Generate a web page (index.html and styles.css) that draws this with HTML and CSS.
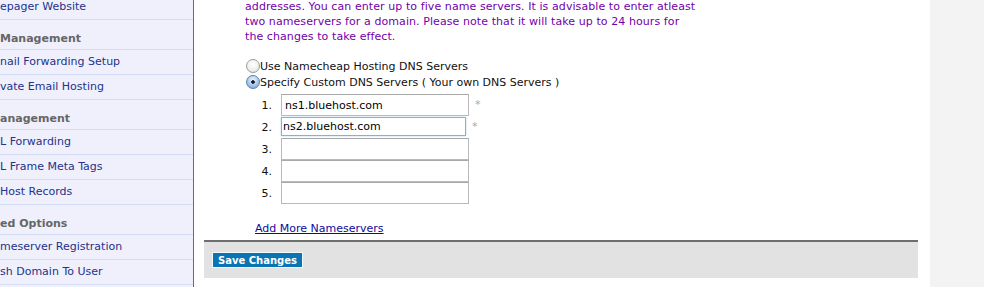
FILE: index.html
```html
<!DOCTYPE html>
<html>
<head>
<meta charset="utf-8">
<link rel="stylesheet" href="styles.css">
</head>
<body>
<div class="page">
  <aside class="sidebar">
    <div class="item first">epager Website</div>
    <div class="head">Management</div>
    <div class="item">nail Forwarding Setup</div>
    <div class="item">vate Email Hosting</div>
    <div class="head">anagement</div>
    <div class="item">L Forwarding</div>
    <div class="item">L Frame Meta Tags</div>
    <div class="item">Host Records</div>
    <div class="head">ed Options</div>
    <div class="item">meserver Registration</div>
    <div class="item">sh Domain To User</div>
    <div class="item"></div>
  </aside>
  <main class="main">
    <div class="content">
      <p class="note">addresses. You can enter up to five name servers. It is advisable to enter atleast<br>two nameservers for a domain. Please note that it will take up to 24 hours for<br>the changes to take effect.</p>
      <div class="radios">
        <label class="radio-row"><input type="radio" name="dns" class="radio">Use Namecheap Hosting DNS Servers</label>
        <label class="radio-row"><input type="radio" name="dns" class="radio" checked>Specify Custom DNS Servers ( Your own DNS Servers )</label>
      </div>
      <div class="ns-list">
        <div class="ns-row"><span class="num">1.</span><input class="ns-input" type="text" value="ns1.bluehost.com"><span class="req">*</span></div>
        <div class="ns-row"><span class="num">2.</span><input class="ns-input focus" type="text" value="ns2.bluehost.com"><span class="req">*</span></div>
        <div class="ns-row"><span class="num">3.</span><input class="ns-input" type="text"></div>
        <div class="ns-row"><span class="num">4.</span><input class="ns-input" type="text"></div>
        <div class="ns-row"><span class="num">5.</span><input class="ns-input" type="text"></div>
      </div>
      <a class="add-more" href="#">Add More Nameservers</a>
    </div>
    <div class="footer">
      <button class="save" type="button">Save Changes</button>
    </div>
  </main>
  <div class="rightcol"></div>
</div>
</body>
</html>
```

FILE: styles.css
```css
html, body {
  margin: 0;
  padding: 0;
  background: #ffffff;
  font-family: "DejaVu Sans", Verdana, sans-serif;
  font-size: 11px;
  height: 287px;
  overflow: hidden;
}
.page {
  display: flex;
  height: 287px;
}
.sidebar {
  width: 193px;
  flex: none;
  background: #eff0fc;
  border-right: 1px solid #6a6a72;
  overflow: hidden;
}
.item {
  height: 24px;
  line-height: 24px;
  border-bottom: 1px solid #d3ddf6;
  color: #24328a;
  white-space: nowrap;
}
.item.first {
  height: 19px;
  line-height: 14px;
}
.head {
  padding-top: 12px;
  line-height: 13px;
  box-sizing: border-box;
  height: 30px;
  border-bottom: 1px solid #d3ddf6;
  color: #666666;
  font-weight: bold;
  white-space: nowrap;
}
.main {
  flex: none;
  width: 714px;
  margin-left: 10px;
  display: flex;
  flex-direction: column;
}
.content {
  padding-left: 41px;
}
.note {
  margin: -1px 0 0 0;
  line-height: 15px;
  color: #7200aa;
  letter-spacing: 0.08px;
}
.radios {
  margin-top: 14px;
  display: flex;
  flex-direction: column;
}
.radio-row {
  display: flex;
  align-items: center;
  height: 16px;
  color: #111111;
  white-space: nowrap;
}
.radio {
  appearance: none;
  -webkit-appearance: none;
  width: 14px;
  height: 14px;
  margin: 0 0 0 1px;
  border-radius: 50%;
  border: 1px solid #9a9a9a;
  background: radial-gradient(circle at 50% 35%, #ffffff 0%, #f2f2f2 50%, #d8d8d8 100%);
  box-sizing: border-box;
  flex: none;
}
.radio:checked {
  border-color: #5f7fa8;
  background: radial-gradient(circle, #1b1b2a 0, #1b1b2a 1.5px, transparent 2px), radial-gradient(circle at 50% 30%, #e8f2fc 0%, #a6c8ec 55%, #6d9fd6 100%);
}
.ns-list {
  margin-top: 4px;
  margin-left: 10px;
  display: flex;
  flex-direction: column;
}
.ns-row {
  display: flex;
  align-items: center;
  height: 22px;
}
.num {
  width: 17px;
  text-align: right;
  margin-right: 9px;
  color: #111111;
}
.ns-input {
  width: 188px;
  height: 22px;
  box-sizing: border-box;
  border: 1px solid #b9b9b9;
  border-top-color: #a8a8a8;
  background: #ffffff;
  font-family: "DejaVu Sans", Verdana, sans-serif;
  font-size: 11px;
  color: #000000;
  padding: 0 3px;
  margin: 0;
  outline: none;
}
.ns-input.focus {
  width: 185px;
  height: 19px;
  margin-top: -2px;
  border: 1px solid #7fb1e3;
  box-shadow: 0 0 2px #b7d5f2;
  padding: 0 1px;
}
.req {
  margin-left: 6px;
  color: #a8a8a8;
  font-size: 11px;
  align-self: flex-start;
  line-height: 16px;
  margin-top: 3px;
}
.add-more {
  display: inline-block;
  margin-top: 17px;
  margin-left: 10px;
  line-height: 15px;
  color: #0b0b9e;
  text-decoration: underline;
}
.footer {
  margin-top: 4px;
  border-top: 2px solid #6e6e6e;
  background: #e2e2e2;
  height: 38px;
  padding: 10px 0 0 8px;
  box-sizing: border-box;
}
.save {
  display: block;
  height: 16px;
  width: 91px;
  padding: 0;
  margin: 0;
  border: 1px solid #f4f8fb;
  background: #0b74b3;
  color: #ffffff;
  font-family: "DejaVu Sans", Verdana, sans-serif;
  font-size: 10px;
  font-weight: bold;
  line-height: 13px;
  text-align: center;
}
.rightcol {
  flex: none;
  margin-left: 12px;
  width: 54px;
  background: #f3f3f3;
}
```
